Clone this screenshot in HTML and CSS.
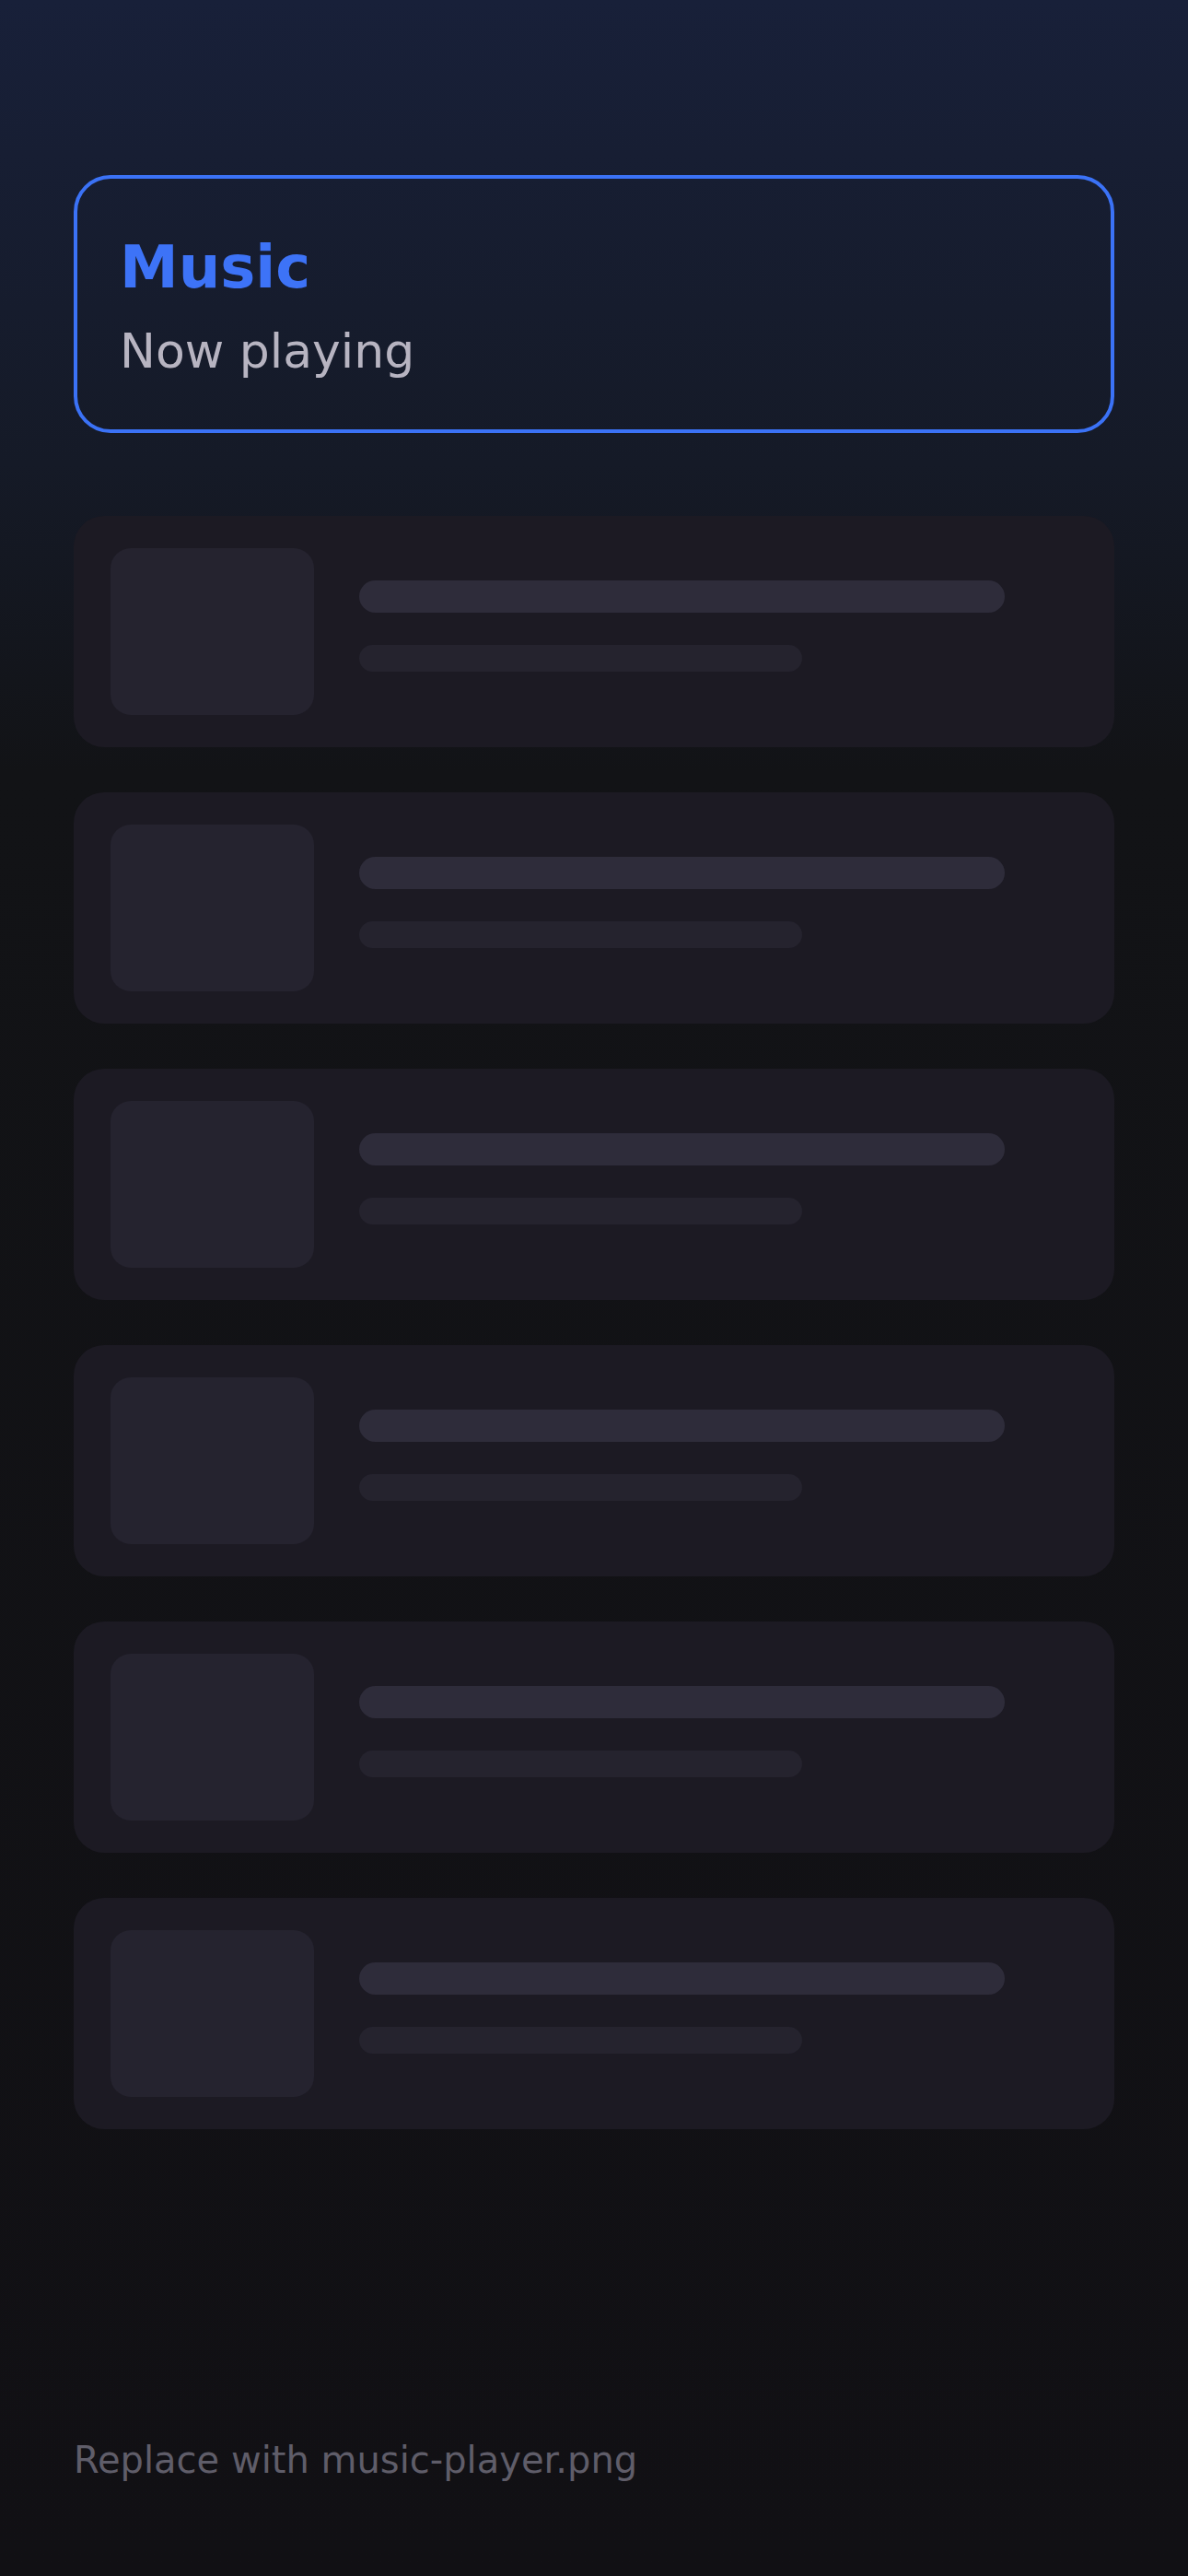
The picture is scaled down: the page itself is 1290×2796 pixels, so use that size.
FILE: index.html
```html
<!DOCTYPE html>
<html lang="en">
<head>
    <meta charset="UTF-8">
    <meta name="viewport" content="width=device-width, initial-scale=1.0">
    <title>Music</title>
    <link rel="stylesheet" href="styles.css">
</head>
<body>
    <div class="page">
        <div class="header-card">
            <h1 class="title">Music</h1>
            <div class="subtitle">Now playing</div>
        </div>

        <div class="track-list">
            <div class="track">
                <div class="cover"></div>
                <div class="track-info">
                    <div class="bar bar-title"></div>
                    <div class="bar bar-artist"></div>
                </div>
            </div>
            <div class="track">
                <div class="cover"></div>
                <div class="track-info">
                    <div class="bar bar-title"></div>
                    <div class="bar bar-artist"></div>
                </div>
            </div>
            <div class="track">
                <div class="cover"></div>
                <div class="track-info">
                    <div class="bar bar-title"></div>
                    <div class="bar bar-artist"></div>
                </div>
            </div>
            <div class="track">
                <div class="cover"></div>
                <div class="track-info">
                    <div class="bar bar-title"></div>
                    <div class="bar bar-artist"></div>
                </div>
            </div>
            <div class="track">
                <div class="cover"></div>
                <div class="track-info">
                    <div class="bar bar-title"></div>
                    <div class="bar bar-artist"></div>
                </div>
            </div>
            <div class="track">
                <div class="cover"></div>
                <div class="track-info">
                    <div class="bar bar-title"></div>
                    <div class="bar bar-artist"></div>
                </div>
            </div>
        </div>

        <div class="footer-note">Replace with music-player.png</div>
    </div>
</body>
</html>
```

FILE: styles.css
```css
html, body {
    margin: 0;
    padding: 0;
}
body {
    font-family: "DejaVu Sans", sans-serif;
    background: linear-gradient(180deg, #182039 0%, #151a27 18%, #121316 30%, #111014 100%);
    background-color: #111014;
    min-height: 100vh;
}
.page {
    display: flex;
    flex-direction: column;
    min-height: 100vh;
    box-sizing: border-box;
    padding: 190px 80px 0 80px;
}
.header-card {
    border: 4px solid #3b72f6;
    border-radius: 40px;
    padding: 56px 46px 54px 46px;
}
.title {
    margin: 0;
    font-size: 64px;
    line-height: 80px;
    font-weight: bold;
    color: #3d73f7;
}
.subtitle {
    margin-top: 20px;
    font-size: 52px;
    line-height: 62px;
    color: #b7b4c1;
}
.track-list {
    display: flex;
    flex-direction: column;
    gap: 49px;
    margin-top: 90px;
}
.track {
    display: flex;
    gap: 49px;
    padding: 35px 40px;
    background-color: #1c1a23;
    border-radius: 33px;
}
.cover {
    width: 221px;
    height: 181px;
    flex-shrink: 0;
    border-radius: 22px;
    background-color: #25232f;
}
.track-info {
    flex: 1;
    display: flex;
    flex-direction: column;
    gap: 35px;
    padding-top: 35px;
}
.bar {
    border-radius: 18px;
}
.bar-title {
    width: 701px;
    height: 35px;
    background-color: #2e2c3a;
}
.bar-artist {
    width: 481px;
    height: 29px;
    background-color: #25232e;
}
.footer-note {
    margin-top: auto;
    padding-bottom: 103px;
    font-size: 40px;
    line-height: 46px;
    color: #5f5d69;
}
```
